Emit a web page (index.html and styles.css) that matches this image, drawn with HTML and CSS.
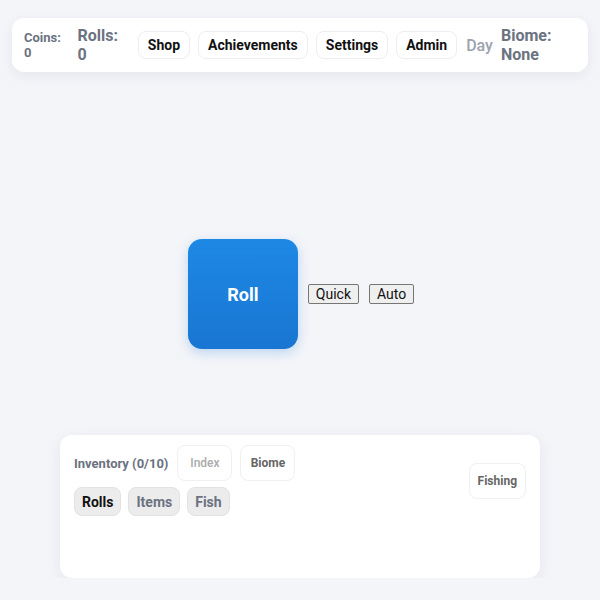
FILE: index.html
```html
<!DOCTYPE html>
<html lang="en">
<head>
    <meta charset="UTF-8">
    <meta name="viewport" content="width=device-width, initial-scale=1.0">
    <title>Roll Game</title>
    <link rel="stylesheet" href="styles.css">
</head>
<body>
    <!-- Barra superior -->
    <div class="topbar">
        <div class="stat stat-coins">Coins: 0</div>
        <div class="stat stat-rolls">Rolls: 0</div>
        <button class="top-btn">Shop</button>
        <button class="top-btn">Achievements</button>
        <button class="top-btn">Settings</button>
        <button class="top-btn">Admin</button>
        <div class="time">Day</div>
        <div class="stat stat-biome">Biome: None</div>
    </div>

    <!-- Zona del roll -->
    <div class="stage">
        <button class="roll-btn">Roll</button>
        <button class="small-btn">Quick</button>
        <button class="small-btn">Auto</button>
    </div>

    <!-- Inventario -->
    <div class="inventory">
        <div class="inv-top">
            <div class="inv-left">
                <div class="inv-header">
                    <span class="inv-title">Inventory (0/10)</span>
                    <button class="panel-btn disabled">Index</button>
                    <button class="panel-btn">Biome</button>
                </div>
                <div class="inv-tabs">
                    <button class="tab active">Rolls</button>
                    <button class="tab">Items</button>
                    <button class="tab">Fish</button>
                </div>
            </div>
            <button class="panel-btn">Fishing</button>
        </div>
        <div class="inv-list"></div>
    </div>
</body>
</html>
```

FILE: styles.css
```css
body {
    margin: 0;
    background-color: #f4f5f9;
    font-family: Roboto, "Liberation Sans", Arial, sans-serif;
    color: #111;
}
button {
    font-family: inherit;
    cursor: pointer;
}

/* Barra superior */
.topbar {
    display: flex;
    align-items: center;
    gap: 8px;
    margin: 18px 12px 0;
    height: 54px;
    padding: 0 12px;
    background-color: #fff;
    border-radius: 12px;
    box-shadow: 0 4px 14px rgba(30, 40, 70, 0.07);
    box-sizing: border-box;
}
.stat {
    font-weight: bold;
    color: #6b7280;
}
.stat-coins {
    width: 46px;
    font-size: 13px;
    line-height: 15px;
}
.stat-rolls {
    width: 53px;
    font-size: 16px;
    line-height: 19px;
}
.stat-biome {
    width: 76px;
    font-size: 16px;
    line-height: 19px;
}
.top-btn {
    height: 28px;
    padding: 0 9px;
    background-color: #fff;
    border: 1px solid #eceef2;
    border-radius: 8px;
    font-size: 14px;
    font-weight: bold;
    color: #111;
}
.time {
    margin-left: 1px;
    font-size: 16px;
    font-weight: 500;
    color: #9ca3af;
}

/* Zona del roll */
.stage {
    display: flex;
    align-items: center;
    justify-content: center;
    gap: 10px;
    margin-top: 167px;
    padding-left: 2px;
}
.roll-btn {
    width: 110px;
    height: 110px;
    border: none;
    border-radius: 14px;
    background: linear-gradient(#1e88e5, #1976d2);
    box-shadow: 0 4px 12px rgba(25, 118, 210, 0.25);
    color: #fff;
    font-size: 18px;
    font-weight: bold;
}
.small-btn {
    padding: 1px 7px;
    background-color: #efefef;
    border: 1px solid #767676;
    border-radius: 2px;
    font-size: 14px;
    color: #111;
}

/* Inventario */
.inventory {
    width: 480px;
    margin: 86px auto 0;
    padding: 10px 14px 14px;
    background-color: #fff;
    border-radius: 12px;
    box-shadow: 0 4px 16px rgba(30, 40, 70, 0.07);
    box-sizing: border-box;
}
.inv-top {
    display: flex;
    align-items: center;
    justify-content: space-between;
}
.inv-header {
    display: flex;
    align-items: center;
    gap: 8px;
}
.inv-title {
    margin-right: 1px;
    font-size: 13px;
    font-weight: bold;
    color: #6b7280;
}
.panel-btn {
    min-width: 55px;
    padding: 10px 8px;
    background-color: #fff;
    border: 1px solid #f0f0f2;
    border-radius: 8px;
    font-size: 12px;
    font-weight: bold;
    line-height: 14px;
    color: #666;
}
.panel-btn.disabled {
    font-weight: 500;
    color: #aaa;
}
.inv-tabs {
    display: flex;
    gap: 7px;
    margin-top: 6px;
}
.tab {
    height: 29px;
    padding: 0 7px;
    background-color: #ececec;
    border: 1px solid #e2e2e2;
    border-radius: 8px;
    font-size: 14px;
    font-weight: bold;
    color: #6b7280;
}
.tab.active {
    color: #111;
}
.inv-list {
    height: 48px;
}
```
